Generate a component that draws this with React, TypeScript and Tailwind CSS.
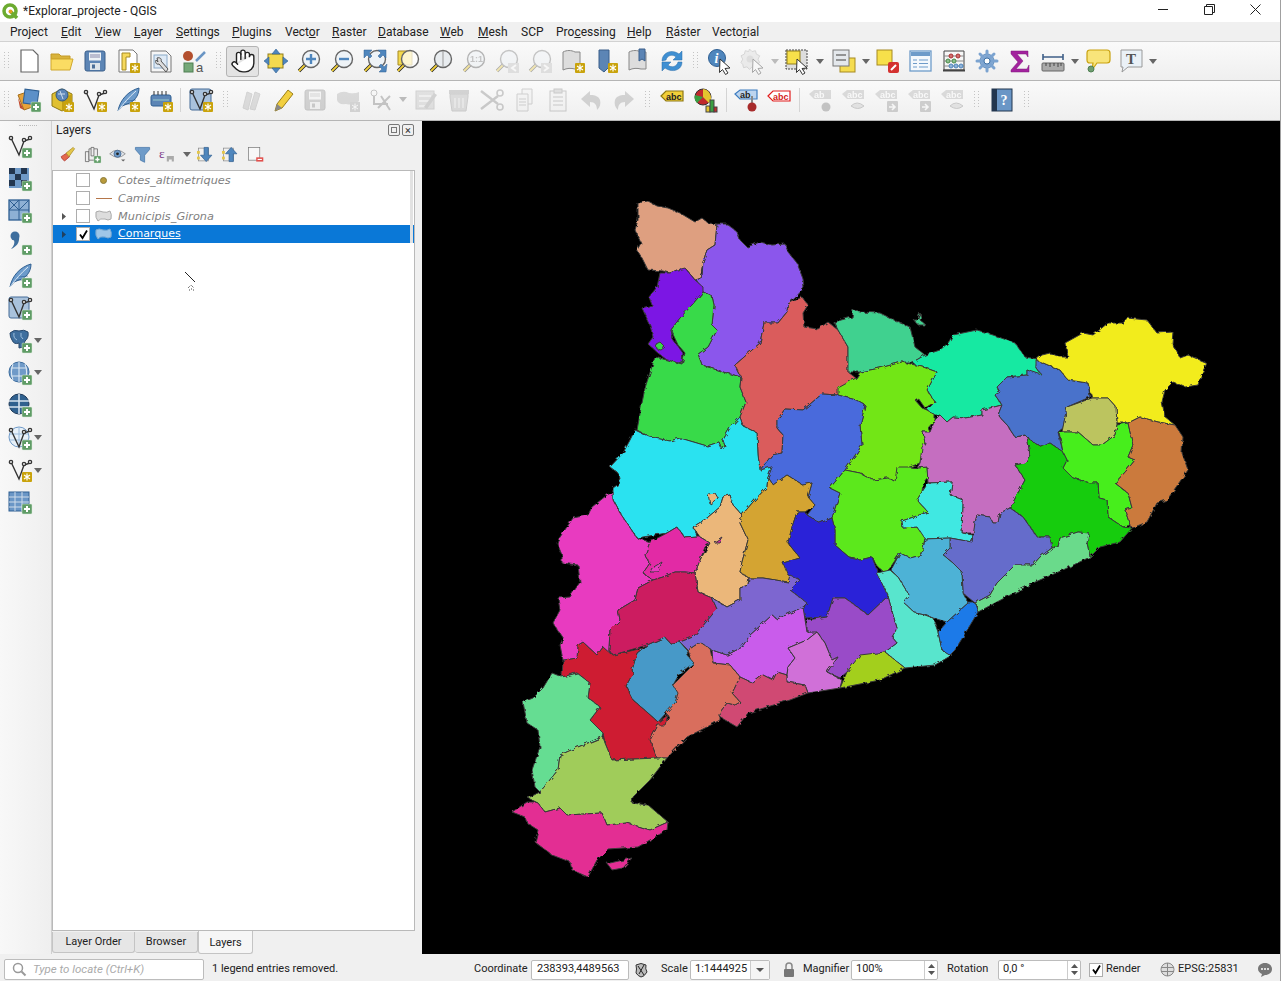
import type { ReactNode } from "react";
import { Hand } from "lucide-react";

const uiFont = "font-['Roboto','Liberation_Sans',sans-serif]";

function Svg({ children, size = 24, off }: { children: ReactNode; size?: number; off?: boolean }) {
  return (
    <svg
      width={size}
      height={size}
      viewBox="0 0 24 24"
      className={off ? "overflow-visible grayscale opacity-35" : "overflow-visible"}
    >
      {children}
    </svg>
  );
}

const Plus = () => (
  <g>
    <rect x="14" y="14" width="10" height="10" rx="1" fill="#5f9c66" stroke="#d8e8d8" strokeWidth="0.5" />
    <path d="M19 16v6M16 19h6" stroke="#fff" strokeWidth="2" />
  </g>
);

const Star = () => (
  <g>
    <rect x="14" y="14" width="10" height="10" rx="1" fill="#c9a30c" />
    <path d="M19 15.5v7M16 17l6 4M22 17l-6 4" stroke="#fff" strokeWidth="1.2" />
  </g>
);

const Vertices = ({ color = "#333" }: { color?: string }) => (
  <g fill="none" stroke={color} strokeWidth="1.4">
    <path d="M3 4l8 17 5-14 6-2" />
    <circle cx="3" cy="4" r="1.6" fill="#fff" />
    <circle cx="16" cy="6" r="1.6" fill="#fff" />
    <circle cx="22" cy="4" r="1.6" fill="#fff" />
  </g>
);

const Feather = () => (
  <g>
    <path d="M2 23C4 12 12 3 23 0c0 8-5 14-12 16l-5 2z" fill="#6c9bcb" stroke="#2f5f92" />
    <path d="M2 23C8 15 13 9 20 3" stroke="#dce9f5" fill="none" />
    <path d="M11 13l9-1M8 16l8 0" stroke="#2f5f92" strokeWidth="0.6" />
  </g>
);

const Mag = ({ children, lens = "#eef3f7" }: { children?: ReactNode; lens?: string }) => (
  <g>
    <path d="M9 15l-7 7" stroke="#222" strokeWidth="3.4" />
    <path d="M9 15l-7 7" stroke="#f1cf3a" strokeWidth="1.8" />
    <circle cx="14" cy="10" r="8.5" fill={lens} stroke="#666" strokeWidth="1.4" />
    {children}
  </g>
);

const Book = ({ x = 0 }: { x?: number }) => (
  <path d={`M${2 + x} 3c4-2 8-2 12 0l5 0v17h-5c-4-1-8-1-12 1z`} fill="#ddd" stroke="#888" />
);

const Floppy = () => (
  <g>
    <rect x="2" y="2" width="20" height="20" rx="2" fill="#5c85b5" stroke="#3a5f8a" />
    <rect x="6" y="3.5" width="12" height="8" fill="#eef2f6" />
    <path d="M7 6h10M7 8h10" stroke="#88a" />
    <rect x="7" y="14" width="10" height="7" fill="#dde4ea" />
    <rect x="9" y="15.5" width="3" height="4" fill="#4a6e98" />
  </g>
);

const Cursor = () => <path d="M12 10l10 9-5 .5 3 4.5-2.500 1.500-3-5-3 3z" fill="#fff" stroke="#333" strokeWidth="1" />;

const AbcTag = ({ bg, border, color = "#222" }: { bg: string; border: string; color?: string }) => (
  <g>
    <path d="M1 8l5-5h17v10H6z" fill={bg} stroke={border} strokeWidth="1.2" />
    <text x="6" y="12" fontSize="9" fontWeight="700" fontFamily="Liberation Sans" fill={color}>
      abc
    </text>
  </g>
);

const Globe = () => (
  <g>
    <circle cx="11" cy="11" r="10" fill="#6f9ac8" stroke="#3b6c9e" />
    <path d="M3 7h16M3 15h16M11 1v20M5 3c-2 5-2 11 0 16M17 3c2 5 2 11 0 16" stroke="#dbe7f2" strokeWidth="1.1" fill="none" />
  </g>
);

const icons: Record<string, ReactNode> = {
  newFile: <path d="M4 1h12l5 5v17H4z" fill="#fff" stroke="#666" strokeWidth="1.2" />,
  open: (
    <g>
      <path d="M1 5h8l2 2h9v3H1z" fill="#d9b33b" stroke="#c49a28" />
      <path d="M1 21V10h22l-3 11z" fill="#fadc63" stroke="#d0a82e" />
    </g>
  ),
  save: <Floppy />,
  saveAs: (
    <g>
      <path d="M3 1h14l4 4v18H3z" fill="#fff" stroke="#777" />
      <path d="M6 4h8v4H10v13H6z" fill="#f6d95c" stroke="#a68a22" />
      <Star />
    </g>
  ),
  props: (
    <g>
      <path d="M2 2h15l5 5v16H2z" fill="#f6f6f6" stroke="#777" />
      <rect x="5" y="6" width="13" height="13" fill="#dfeaf5" stroke="#8aa9c8" />
      <path d="M8 9c3-1 5 1 4 3l7 8-2 3-7-8c-3 1-4-2-3-4l2 2z" fill="#ddd" stroke="#555" />
    </g>
  ),
  style: (
    <g>
      <circle cx="6" cy="7" r="5" fill="#b34f2e" />
      <path d="M14 12L23 3" stroke="#6a95c4" strokeWidth="2.500" />
      <rect x="2" y="14" width="9" height="9" fill="#75a878" stroke="#4f7f52" />
      <text x="14" y="23" fontSize="13" fontFamily="Liberation Sans" fill="#555">a</text>
    </g>
  ),
  panTo: (
    <g>
      <rect x="4" y="5" width="15" height="14" fill="#f3d94f" stroke="#927e1a" />
      <path d="M12 0l4 5H8zM12 24l-4-5h8zM0 12l5-4v8zM24 12l-5 4V8z" fill="#4f86bd" stroke="#2f5f92" strokeWidth="0.6" />
    </g>
  ),
  zoomIn: (
    <Mag>
      <path d="M14 5v10M9 10h10" stroke="#4f86bd" strokeWidth="2.400" />
    </Mag>
  ),
  zoomOut: (
    <Mag>
      <path d="M9 10h10" stroke="#4f86bd" strokeWidth="2.400" />
    </Mag>
  ),
  zoomFull: (
    <g>
      <Mag />
      <path d="M1 1h8L6 4l3 3-2 2-3-3-3 3zM23 1v8l-3-3-3 3-2-2 3-3-3-3zM23 23h-7l3-3-3-3 2-2 3 3 3-3z" fill="#4f86bd" stroke="#2f5f92" strokeWidth="0.5" />
    </g>
  ),
  zoomLayer: (
    <g>
      <path d="M2 2h14v14H2z" fill="#f3d94f" stroke="#a68a22" />
      <Mag lens="#ffffffbb" />
    </g>
  ),
  zoomSel: (
    <Mag lens="#e8ecef">
      <path d="M14 2v16" stroke="#999" />
    </Mag>
  ),
  zoom11: (
    <g opacity="0.45">
      <Mag>
        <text x="8" y="13" fontSize="9" fontWeight="700" fontFamily="Liberation Sans" fill="#888">1:1</text>
      </Mag>
    </g>
  ),
  zoomLast: (
    <g opacity="0.35">
      <Mag />
      <path d="M24 14v10H13v-10z" fill="#bbb" />
      <path d="M21 16l-4 3 4 3" stroke="#fff" strokeWidth="2" fill="none" />
    </g>
  ),
  zoomNext: (
    <g opacity="0.35">
      <Mag />
      <path d="M24 14v10H13v-10z" fill="#bbb" />
      <path d="M16 16l4 3-4 3" stroke="#fff" strokeWidth="2" fill="none" />
    </g>
  ),
  bookNew: (
    <g>
      <Book />
      <Star />
    </g>
  ),
  bookBlue: (
    <g>
      <path d="M5 1h10v17l-5 5-5-4z" fill="#5c85b5" stroke="#3a5f8a" />
      <Star />
    </g>
  ),
  bookShow: (
    <g>
      <Book />
      <path d="M12 0h6v12l-3-2-3 2z" fill="#5c85b5" stroke="#3a5f8a" />
    </g>
  ),
  refresh: (
    <g fill="#3f8fd2" stroke="#2a6ca8" strokeWidth="0.5">
      <path d="M2 12C2 5 9 1 15 3c2 .7 3 1.400 4 2l3-3v9h-9l3-3c-3-3-9-2-10 3z" />
      <path d="M22 13c0 7-7 10-13 8-2-.7-3-1.400-4-2l-3 3v-9h9l-3 3c3 3 9 2 10-3z" />
    </g>
  ),
  identify: (
    <g>
      <circle cx="9" cy="9" r="8.500" fill="#4f86bd" stroke="#2f5f92" />
      <text x="6.500" y="14" fontSize="14" fontWeight="700" fontStyle="italic" fontFamily="Liberation Serif" fill="#fff">i</text>
      <Cursor />
    </g>
  ),
  action: (
    <g opacity="0.4">
      <path d="M10 0l3 3 4-1 1 4 4 2-2 4 2 4-4 2-1 4-4-1-3 3-3-3-4 1-1-4-2-2 2-4-2-4 4-2 1-4 4 1z" fill="#ddd" stroke="#999" transform="scale(.85)" />
      <circle cx="9" cy="10" r="3.500" fill="#bbb" />
      <Cursor />
    </g>
  ),
  select: (
    <g>
      <rect x="1" y="1" width="21" height="19" fill="#ddd" stroke="#444" strokeDasharray="2 1" />
      <rect x="2" y="2" width="13" height="13" fill="#f7e04a" stroke="#927e1a" />
      <Cursor />
    </g>
  ),
  attrForm: (
    <g>
      <rect x="8" y="9" width="15" height="14" fill="#f5dc4f" stroke="#a68a22" />
      <rect x="1" y="1" width="16" height="16" fill="#e4e8ec" stroke="#777" />
      <path d="M4 6h10M4 11h10" stroke="#777" strokeWidth="1.600" />
    </g>
  ),
  deselect: (
    <g>
      <rect x="1" y="1" width="15" height="15" fill="#f7e04a" stroke="#a68a22" />
      <rect x="12" y="13" width="11" height="11" rx="2" fill="#d4312f" />
      <path d="M15 21l5-5" stroke="#fff" strokeWidth="2" />
    </g>
  ),
  table: (
    <g>
      <rect x="1" y="2" width="21" height="20" fill="#f4f8fc" stroke="#6e9bc9" strokeWidth="1.300" />
      <rect x="2" y="3" width="19" height="4" fill="#6e9bc9" />
      <path d="M4 11h4M10 11h9M4 14.500h4M10 14.500h9M4 18h4M10 18h9" stroke="#6e9bc9" strokeWidth="1.200" />
    </g>
  ),
  stats: (
    <g fill="none">
      <path d="M2 2h20v19H2z" stroke="#444" />
      <path d="M1 21.500h22" stroke="#444" strokeWidth="2" />
      <path d="M2 7h20M2 12h20M2 17h20" stroke="#888" />
      <g fill="#d36c6c" stroke="#a33">
        <circle cx="9" cy="7" r="2" />
        <circle cx="16" cy="7" r="2" />
      </g>
      <g fill="#8cc08c" stroke="#4a8a4a">
        <circle cx="6" cy="12" r="2" />
        <circle cx="12" cy="12" r="2" />
      </g>
      <g fill="#8fb3d8" stroke="#4f86bd">
        <circle cx="9" cy="17" r="2" />
        <circle cx="14" cy="17" r="2" />
        <circle cx="19" cy="17" r="2" />
      </g>
    </g>
  ),
  gear: (
    <g>
      <circle cx="12" cy="12" r="7" fill="#86aad3" stroke="#5a89bb" />
      <path d="M12 2v20M2 12h20M5 5l14 14M19 5L5 19" stroke="#7ba3d0" strokeWidth="3" strokeLinecap="round" />
      <circle cx="12" cy="12" r="3" fill="#fff" stroke="#3f72a6" />
    </g>
  ),
  sum: <path d="M3 2h17v6l-2-3H9l6 7-7 8h11l2-4v7H3v-2l7-8-7-8z" fill="#a3239e" stroke="#7d1a7a" strokeWidth="0.5" />,
  measure: (
    <g>
      <path d="M2 5v6M22 5v6M2 8h20" stroke="#3f5f88" strokeWidth="1.600" />
      <rect x="1" y="14" width="22" height="8" rx="1" fill="#aaa" stroke="#666" />
      <path d="M5 14v3M9 14v4M13 14v3M17 14v4M20 14v3" stroke="#444" />
    </g>
  ),
  tip: (
    <g>
      <path d="M1 4q0-3 3-3h17q3 0 3 3v7q0 3-3 3H11l-5 7 1-7H4q-3 0-3-3z" fill="#f8e47a" stroke="#c9a20f" strokeWidth="1.200" />
      <circle cx="5" cy="20" r="3" fill="#6f9e70" stroke="#4f7f52" />
    </g>
  ),
  text: (
    <g>
      <path d="M2 1h21v17H9l-6 5 1-5H2z" fill="#eaf1f7" stroke="#999" />
      <text x="7" y="15" fontSize="15" fontWeight="700" fontFamily="Liberation Serif" fill="#555">T</text>
    </g>
  ),
  addLayer: (
    <g>
      <path d="M1 7l12-4 5 15-11 4z" fill="#e8a33a" stroke="#a56f1a" />
      <path d="M1 10l6 12-4-2z" fill="#c24b2f" />
      <rect x="7" y="2" width="14" height="14" fill="#5c90c8" stroke="#2f5f92" transform="rotate(8 14 9)" />
      <Plus />
    </g>
  ),
  addGpkg: (
    <g>
      <path d="M12 1l10 5v12l-10 5-10-5V6z" fill="#e0c030" stroke="#8d7814" />
      <path d="M12 11l10-5v12l-10 5z" fill="#c29f14" />
      <circle cx="12" cy="7" r="6" fill="#5c86b8" stroke="#33597f" />
      <path d="M8 6h7M10 3l3 8" stroke="#cde" />
      <Star />
    </g>
  ),
  newVertices: (
    <g>
      <Vertices />
      <Star />
    </g>
  ),
  newFeather: (
    <g>
      <Feather />
      <Star />
    </g>
  ),
  newChip: (
    <g>
      <rect x="2" y="7" width="20" height="11" rx="2" fill="#5c85b5" stroke="#2f5f92" />
      <path d="M5 3v4M9 3v4M13 3v4M17 3v4" stroke="#333" />
      <path d="M4 12h16" stroke="#9cc" />
      <Star />
    </g>
  ),
  vlayerNew: (
    <g>
      <rect x="1" y="1" width="21" height="21" rx="2" fill="#a9c2dc" stroke="#446b96" />
      <Vertices />
      <Star />
    </g>
  ),
  pencils: (
    <g opacity="0.28">
      <path d="M4 20L8 4l5 2-4 16zM11 21l5-17 5 2-5 16z" fill="#999" stroke="#777" />
    </g>
  ),
  pencil: (
    <g>
      <path d="M4 23l2-7L17 2l5 4-11 14z" fill="#f2cf3f" stroke="#9b7f18" />
      <path d="M4 23l2-7 5 4z" fill="#888" />
    </g>
  ),
  saveEdits: (
    <g className="grayscale" opacity="0.3">
      <Floppy />
    </g>
  ),
  addPoly: (
    <g opacity="0.3">
      <path d="M1 6q6-4 12-1 6 1 10-1v9q-5 5-13 3-8 1-9-4z" fill="#999" />
      <rect x="14" y="14" width="10" height="10" fill="#888" />
      <path d="M19 15.500v7M16 17l6 4M22 17l-6 4" stroke="#fff" />
    </g>
  ),
  vertexTool: (
    <g opacity="0.3" fill="none" stroke="#555">
      <circle cx="5" cy="5" r="3" />
      <path d="M5 8v8h14M9 20l12-12M12 8l9 14" strokeWidth="2" />
    </g>
  ),
  editForm: (
    <g opacity="0.28">
      <rect x="2" y="3" width="18" height="18" fill="#aaa" stroke="#777" />
      <path d="M5 8h12M5 13h12M5 18h8" stroke="#eee" strokeWidth="1.600" />
      <path d="M10 19L20 5l3 2-10 14z" fill="#777" />
    </g>
  ),
  trash: (
    <g opacity="0.28">
      <path d="M3 6h18v3l-2 14H5L3 9z" fill="#999" stroke="#666" />
      <rect x="2" y="2" width="20" height="4" fill="#777" />
      <path d="M8 10v10M12 10v10M16 10v10" stroke="#eee" />
    </g>
  ),
  scissors: (
    <g opacity="0.3" fill="none" stroke="#666" strokeWidth="1.600">
      <circle cx="20" cy="5" r="3" />
      <circle cx="20" cy="19" r="3" />
      <path d="M1 3l17 13M1 21L18 8" strokeWidth="2.400" />
    </g>
  ),
  copy: (
    <g opacity="0.3" fill="#eee" stroke="#777">
      <path d="M9 1h10v15H9z" />
      <path d="M4 6h11v17H4z" />
      <path d="M6 11h7M6 14h7M6 17h7" />
    </g>
  ),
  paste: (
    <g opacity="0.3" fill="#eee" stroke="#666">
      <rect x="4" y="3" width="16" height="20" />
      <rect x="8" y="1" width="8" height="4" fill="#aaa" />
      <path d="M7 9h10M7 13h10M7 17h10" />
    </g>
  ),
  undo: <path opacity="0.25" d="M11 3L2 11l9 8v-5c5 0 7 3 7 8 3-3 4-6 3-10-1-3-4-5-10-5z" fill="#666" />,
  redo: <path opacity="0.25" d="M13 3l9 8-9 8v-5c-5 0-7 3-7 8-3-3-4-6-3-10 1-3 4-5 10-5z" fill="#666" />,
  label: <AbcTag bg="#f2d03a" border="#8d7814" />,
  diagram: (
    <g>
      <circle cx="9" cy="9" r="8" fill="#c0292c" stroke="#333" />
      <path d="M9 9V1a8 8 0 0 1 7 5zM9 9l7-3a8 8 0 0 1-1 9z" fill="#e4c52f" />
      <path d="M9 9L3 15a8 8 0 0 1-2-8z" fill="#3a9e41" />
      <rect x="12" y="18" width="4" height="6" fill="#e4c52f" stroke="#444" />
      <rect x="16" y="12" width="4" height="12" fill="#3a9e41" stroke="#444" />
      <rect x="20" y="19" width="3" height="5" fill="#c0292c" stroke="#444" />
    </g>
  ),
  pinLabel: (
    <g>
      <path d="M1 6l5-4h17v9H6z" fill="#bcd4ee" stroke="#3d7cc0" strokeWidth="1.200" />
      <text x="6" y="10" fontSize="9" fontWeight="700" fontFamily="Liberation Sans" fill="#222">ab</text>
      <path d="M18 8v8" stroke="#888" strokeWidth="2" />
      <circle cx="18" cy="19" r="4.500" fill="#a82c2c" />
    </g>
  ),
  labelRed: <AbcTag bg="#fff" border="#e21d1d" color="#d41d1d" />,
  abPin: (
    <g opacity="0.3">
      <path d="M1 6l5-4h17v9H6z" fill="#999" />
      <text x="6" y="10" fontSize="9" fontWeight="700" fontFamily="Liberation Sans" fill="#fff">ab</text>
      <circle cx="18" cy="19" r="4.500" fill="#555" />
    </g>
  ),
  abcEye: (
    <g opacity="0.3">
      <path d="M1 6l5-4h17v9H6z" fill="#999" />
      <text x="6" y="10" fontSize="9" fontWeight="700" fontFamily="Liberation Sans" fill="#fff">abc</text>
      <path d="M10 18q6-6 13 0-6 5-13 0z" fill="#bbb" stroke="#666" />
    </g>
  ),
  abcBox: (
    <g opacity="0.3">
      <path d="M1 6l5-4h17v9H6z" fill="#999" />
      <text x="6" y="10" fontSize="9" fontWeight="700" fontFamily="Liberation Sans" fill="#fff">abc</text>
      <rect x="13" y="13" width="11" height="11" rx="1" fill="#777" />
      <path d="M15 19h6M18 16l3 3-3 3" stroke="#fff" strokeWidth="1.600" fill="none" />
    </g>
  ),
  help: (
    <g>
      <rect x="2" y="1" width="20" height="22" fill="#6a96c6" stroke="#22364f" />
      <rect x="2" y="1" width="5" height="22" fill="#22364f" />
      <text x="10.500" y="17" fontSize="14" fontWeight="700" fontFamily="Liberation Serif" fill="#fff">?</text>
    </g>
  ),
  // left toolbar
  ltVertices: (
    <g>
      <Vertices />
      <Plus />
    </g>
  ),
  ltRaster: (
    <g>
      <rect x="1" y="1" width="20" height="20" fill="#6f9ac8" />
      <path d="M1 1h6v6H1zM13 1h6v6h-6zM7 7h6v6H7zM1 13h6v6H1zM13 13h6v6h-6z" fill="#22364f" />
      <Plus />
    </g>
  ),
  ltMesh: (
    <g>
      <rect x="1" y="1" width="20" height="20" fill="#8eb0d4" stroke="#2f5f92" strokeWidth="1.300" />
      <path d="M1 1l10 10M1 11L11 1M11 11L21 1M1 11h20M11 1v20" stroke="#2f5f92" />
      <Plus />
    </g>
  ),
  ltComma: (
    <g>
      <circle cx="7" cy="5" r="4.500" fill="#3f6f9e" />
      <path d="M11 5c1 7-3 11-8 13 3-3 4-6 3-9z" fill="#3f6f9e" />
      <Plus />
    </g>
  ),
  ltFeather: (
    <g>
      <Feather />
      <Plus />
    </g>
  ),
  ltVLayer: (
    <g>
      <rect x="1" y="1" width="20" height="21" rx="2" fill="#a9c2dc" stroke="#446b96" />
      <Vertices />
      <Plus />
    </g>
  ),
  ltPostgis: (
    <g>
      <path d="M2 4q4-4 9-2 5-2 9 1 1 6-3 9l-2 6-4 1v-5q-5 2-7-3-2-3-2-7z" fill="#3f6f9e" stroke="#27486c" />
      <path d="M6 4q-1 5 3 7M13 4q-1 4 2 6" stroke="#9fbfdc" fill="none" />
      <Plus />
    </g>
  ),
  ltGlobeWms: (
    <g>
      <Globe />
      <Plus />
    </g>
  ),
  ltGlobeDark: (
    <g>
      <circle cx="11" cy="11" r="10" fill="#30618f" stroke="#1f3a59" />
      <path d="M1 8h20M1 14h20M11 1v20" stroke="#d6e3ef" strokeWidth="1.600" />
      <Plus />
    </g>
  ),
  ltGlobeV: (
    <g>
      <circle cx="11" cy="11" r="10" fill="#e7f0f8" stroke="#6f9ac8" />
      <path d="M2 8h18M2 14h18M11 1v20" stroke="#9cbcdc" />
      <Vertices />
      <Plus />
    </g>
  ),
  ltVStar: (
    <g>
      <Vertices />
      <Star />
    </g>
  ),
  ltTable: (
    <g>
      <rect x="1" y="2" width="20" height="19" fill="#6a96c6" stroke="#2f5f92" />
      <path d="M1 7h20M1 12h20M1 17h20M7 2v19M14 2v19" stroke="#cfdcea" />
      <Plus />
    </g>
  ),
  // layers panel toolbar
  lpStyle: (
    <g>
      <path d="M3 15l8-5 4 5-7 6c-2-1-4-3-5-6z" fill="#e36a4d" stroke="#a33" />
      <path d="M10 10l10-8 2 2-8 11z" fill="#e4c64a" stroke="#a68a22" />
    </g>
  ),
  lpGroup: (
    <g fill="#eee" stroke="#555">
      <path d="M2 8h5v14H2z" />
      <path d="M7 4h12v16H7z" />
      <path d="M10 2h4v12h-4z" />
      <Plus />
    </g>
  ),
  lpEye: (
    <g>
      <path d="M1 11q10-10 22 0-10 10-22 0z" fill="#dfe4ea" stroke="#777" />
      <circle cx="12" cy="11" r="5" fill="#6e9bc9" stroke="#3f5f88" />
      <circle cx="12" cy="11" r="2" fill="#222" />
      <path d="M17 19h6l-3 3z" fill="#666" />
    </g>
  ),
  lpFilter: <path d="M2 2h20v3l-7 8v10l-6-3v-7L2 5z" fill="#6e9bc9" stroke="#3f72a6" />,
  lpExpr: (
    <g>
      <text x="0" y="17" fontSize="19" fontFamily="Liberation Serif" fill="#7e3a8c">ε</text>
      <path d="M11 14h10v8h-3v-3h-4v3h-3z" fill="#aaa" />
    </g>
  ),
  lpExpand: (
    <g>
      <rect x="2" y="3" width="14" height="18" fill="#f1f1f1" stroke="#888" />
      <rect x="0" y="7" width="4" height="4" fill="#e4c64a" />
      <rect x="0" y="15" width="4" height="4" fill="#e4c64a" />
      <path d="M10 2h6v11h5l-8 9-8-9h5z" fill="#4f86bd" stroke="#2f5f92" />
    </g>
  ),
  lpCollapse: (
    <g>
      <rect x="2" y="3" width="14" height="18" fill="#f1f1f1" stroke="#888" />
      <rect x="0" y="7" width="4" height="4" fill="#e4c64a" />
      <rect x="0" y="15" width="4" height="4" fill="#e4c64a" />
      <path d="M10 22h6V11h5l-8-9-8 9h5z" fill="#4f86bd" stroke="#2f5f92" />
    </g>
  ),
  lpRemove: (
    <g>
      <rect x="2" y="2" width="16" height="18" fill="#f7f7f7" stroke="#777" />
      <rect x="13" y="16" width="10" height="6" fill="#e2504d" />
      <path d="M15 19h6" stroke="#fff" strokeWidth="1.600" />
    </g>
  ),
};

function Grip({ w = 15 }: { w?: number }) {
  return (
    <div className="flex h-full shrink-0 items-center justify-center" style={{ width: w }}>
      <svg width="5" height="18" viewBox="0 0 5 18">
        {[0, 3, 6, 9, 12, 15].map((y) => (
          <g key={y} fill="#c4c4c4">
            <rect x="0" y={y} width="1" height="1" />
            <rect x="4" y={y} width="1" height="1" />
          </g>
        ))}
      </svg>
    </div>
  );
}

const Arrow = ({ w = 11, color = "#666" }: { w?: number; color?: string }) => (
  <div className="flex h-full shrink-0 items-center justify-center" style={{ width: w }}>
    <svg width="8" height="5" viewBox="0 0 8 5">
      <path d="M0 0h8L4 5z" fill={color} />
    </svg>
  </div>
);

const Btn = ({ name, w = 33 }: { name: string; w?: number }) => (
  <div className="flex h-full shrink-0 items-center justify-center" style={{ width: w }}>
    <Svg>{icons[name]}</Svg>
  </div>
);

const Sep = ({ w = 7 }: { w?: number }) => (
  <div className="flex h-full shrink-0 items-center justify-center" style={{ width: w }}>
    <div className="h-[24px] w-px bg-[#d4d4d4]" />
  </div>
);

type Region = { fill: string; pts: string };

const regions: Region[] = [
  { fill: "#de9f80", pts: "638,203 648,201 657,206 668,208 680,213 695,222 702,218 708,223 717,224 715,245 707,250 703,262 701,273 702,278 695,280 687,270 677,270 670,273 663,271 648,270 642,258 637,250 641,243 635,230 638,220" },
  { fill: "#8b57ec", pts: "717,224 727,224 737,232 740,240 747,247 760,242 772,245 785,244 788,252 797,263 803,279 804,288 795,298 788,304 787,312 778,323 764,323 760,343 743,358 735,365 741,377 723,372 702,365 698,354 708,347 717,330 712,325 714,305 712,296 703,292 697,280 702,277 703,262 707,250 715,245" },
  { fill: "#7b12e4", pts: "660,273 670,273 677,270 685,268 695,280 703,287 703,292 692,305 692,310 680,318 671,330 673,340 683,353 682,364 667,360 658,353 648,344 653,337 650,325 642,308 652,305 649,297 657,287" },
  { fill: "#38da49", pts: "703,292 712,296 714,305 712,325 717,330 708,347 698,354 702,365 723,372 741,377 740,387 746,402 740,417 730,428 723,440 725,446 722,450 719,442 707,446 680,438 670,441 650,437 637,430 642,403 645,388 655,357 667,360 682,364 685,353 678,345 671,330 680,318 692,305" },
  { fill: "#38da49", pts: "656,344 660,342 665,347 661,350 657,349" },
  { fill: "#da5c5c", pts: "802,297 808,305 803,313 804,327 818,329 828,322 838,330 848,347 848,372 856,378 840,388 838,395 822,394 803,410 785,409 777,420 777,428 783,435 782,453 772,455 760,470 758,455 757,433 743,426 740,417 746,402 740,387 741,377 735,365 743,358 760,343 764,323 778,323 787,312 788,304" },
  { fill: "#3fd18f", pts: "834,322 852,317 853,310 860,312 880,313 898,322 910,327 915,347 925,355 913,362 902,362 880,368 860,372 848,372 848,347 838,330" },
  { fill: "#3fd18f", pts: "917,320 920,313 921,317 920,320 926,325 918,325 914,320" },
  { fill: "#18e9a2", pts: "913,362 925,355 940,350 948,343 953,335 977,330 993,335 1015,343 1025,357 1037,359 1036,368 1042,375 1030,372 1027,370 1027,375 1007,377 997,387 1000,392 995,395 1002,405 982,410 982,415 965,418 953,417 947,422 940,415 935,415 927,410 935,402 927,390 937,372 923,367 915,365" },
  { fill: "#72e616", pts: "838,388 856,378 860,372 880,368 902,362 915,365 923,367 937,372 927,390 935,402 925,408 918,398 915,400 922,408 927,410 935,415 935,420 928,428 930,432 923,432 925,443 920,463 910,467 897,473 895,482 888,478 873,480 860,473 845,470 862,445 860,425 865,405 856,400 838,395" },
  { fill: "#4a6bdc", pts: "822,394 838,395 856,400 865,405 860,425 862,445 845,470 830,488 840,493 833,515 832,518 820,523 807,515 815,505 808,497 812,483 803,485 787,475 773,485 768,477 772,467 760,470 772,455 782,453 783,435 777,428 777,420 785,409 803,410" },
  { fill: "#2ce2f0", pts: "635,430 650,437 670,441 680,438 707,446 719,442 722,450 725,446 723,440 730,428 740,417 743,426 757,433 758,455 760,470 772,467 768,477 767,487 753,502 742,515 733,505 730,495 723,497 720,507 707,518 693,527 698,537 685,538 677,527 667,533 637,538 620,513 613,500 613,488 620,483 618,473 610,467 623,453 630,440" },
  { fill: "#ebb77a", pts: "708,494 715,493 718,498 710,504" },
  { fill: "#ebb77a", pts: "693,527 707,518 720,507 723,497 730,495 733,505 742,515 740,523 748,540 742,562 740,572 749,578 748,585 740,588 740,600 727,607 712,598 698,592 695,573 700,560 710,543 700,537" },
  { fill: "#e22ba5", pts: "715,543 723,538 720,543" },
  { fill: "#d4a433", pts: "768,477 773,485 787,475 803,485 812,483 808,497 815,505 805,512 797,512 792,527 788,543 800,558 783,563 792,573 788,582 763,578 749,578 740,572 742,562 748,540 740,523 742,515 753,502 767,487" },
  { fill: "#5ce81e", pts: "860,473 873,480 888,478 895,482 897,467 910,467 917,468 927,467 928,477 923,483 922,492 917,500 928,512 902,521 903,528 917,527 925,537 922,555 910,558 900,553 892,565 890,568 885,573 878,567 872,557 860,560 850,558 835,545 835,530 832,518 840,493 830,488 845,470" },
  { fill: "#2c24d8", pts: "792,527 797,512 805,512 807,515 820,523 832,518 835,530 835,545 850,558 860,560 872,557 878,573 888,596 868,615 845,598 833,598 827,617 805,618 803,610 806,603 790,590 800,580 788,575 783,563 800,558 788,543" },
  { fill: "#c56ec0", pts: "922,447 925,443 923,432 930,432 935,420 940,415 947,422 953,417 965,418 982,415 982,410 1002,405 998,415 1007,425 1015,437 1027,435 1030,455 1025,463 1015,465 1025,480 1010,508 1000,513 998,523 993,523 990,517 977,515 975,523 975,533 962,533 963,500 950,495 952,482 928,483 927,467 917,468 920,463" },
  { fill: "#41e8e2", pts: "928,483 952,482 950,495 963,500 962,533 973,535 972,542 950,538 925,539 917,527 903,528 902,521 928,512 917,500 922,492" },
  { fill: "#4872cb", pts: "1036,360 1060,370 1068,380 1088,383 1090,397 1067,407 1063,428 1058,432 1063,452 1050,443 1042,447 1030,440 1025,435 1015,437 1007,425 998,415 1002,405 995,395 1000,392 997,387 1007,377 1027,375 1027,370 1042,375 1036,368" },
  { fill: "#f2ec1b", pts: "1042,355 1050,353 1060,357 1068,357 1065,343 1083,333 1093,335 1108,323 1123,323 1127,318 1147,320 1157,333 1173,332 1172,343 1180,358 1188,355 1207,363 1202,373 1198,385 1185,387 1173,382 1165,390 1162,402 1165,417 1175,425 1158,422 1140,417 1128,423 1117,423 1116,407 1108,398 1092,398 1088,383 1068,380 1060,370 1036,360" },
  { fill: "#bcc45f", pts: "1067,407 1092,398 1108,398 1116,407 1117,425 1115,435 1102,445 1093,445 1078,432 1062,432" },
  { fill: "#46ee1d", pts: "1059,432 1078,432 1093,445 1102,445 1115,435 1117,425 1128,423 1133,445 1128,457 1135,460 1127,470 1115,483 1128,493 1132,508 1125,510 1130,525 1123,527 1108,517 1107,500 1099,498 1098,483 1090,483 1073,478 1063,468 1067,460 1063,452" },
  { fill: "#cb7a3e", pts: "1128,423 1140,417 1158,422 1175,425 1183,437 1182,453 1188,470 1167,500 1157,503 1147,522 1132,528 1130,525 1125,510 1132,508 1128,493 1115,483 1127,470 1135,460 1128,457 1133,445" },
  { fill: "#14cc0e", pts: "1027,436 1030,440 1042,447 1050,443 1063,452 1067,460 1063,468 1073,478 1090,483 1098,483 1099,498 1107,500 1108,517 1123,527 1132,528 1120,542 1100,547 1090,557 1087,543 1089,533 1078,532 1060,538 1058,547 1052,548 1050,537 1037,537 1023,517 1010,508 1025,480 1015,465 1025,463 1030,455" },
  { fill: "#656ccb", pts: "975,523 977,515 990,517 993,523 998,523 1000,513 1010,508 1023,517 1037,537 1050,537 1052,548 1040,557 1033,565 1015,565 997,583 990,595 975,603 963,593 962,572 953,563 943,555 950,548 950,538 972,542" },
  { fill: "#4db2d6", pts: "925,539 950,538 950,548 943,555 953,563 962,572 963,593 968,603 947,622 933,618 925,615 915,613 903,602 909,595 898,577 891,570 900,553 910,558 922,555" },
  { fill: "#6ada8b", pts: "975,603 990,595 997,583 1015,565 1033,565 1040,557 1052,548 1058,547 1060,538 1078,532 1089,533 1087,543 1090,557 1063,570 1033,583 978,612" },
  { fill: "#58e5cd", pts: "877,573 890,570 898,577 909,595 903,602 915,613 925,615 933,618 938,632 942,650 952,655 935,665 905,668 895,660 885,652 897,643 892,637 897,628 893,615 888,596" },
  { fill: "#1a7ae8", pts: "968,603 975,603 978,612 963,637 955,650 950,655 942,650 938,632 947,622" },
  { fill: "#994bc8", pts: "807,620 827,617 833,598 845,598 868,615 888,596 893,615 897,628 892,637 897,643 885,652 860,657 847,672 840,678 827,672 838,657 832,660 825,643 818,633 807,632" },
  { fill: "#a3cf1a", pts: "840,688 847,672 860,655 885,652 895,660 905,668 880,680" },
  { fill: "#c95ceb", pts: "712,650 727,655 742,647 750,635 772,615 777,619 803,607 807,632 817,632 807,640 788,648 795,658 788,667 787,675 777,672 773,680 763,675 753,683 740,677 730,665 713,663" },
  { fill: "#d06fd8", pts: "788,648 807,640 817,632 825,643 832,660 838,657 827,672 842,680 840,688 808,693 805,685 787,682 787,675 788,667 795,658" },
  { fill: "#d04a73", pts: "740,677 753,683 763,675 773,680 777,672 787,675 787,682 805,685 808,693 790,700 767,707 748,713 737,727 720,717 720,712 727,703 735,705 740,702 732,693" },
  { fill: "#d96e5d", pts: "688,650 700,642 710,648 713,663 730,665 740,677 732,693 740,702 735,705 727,703 720,712 720,720 707,727 687,737 667,758 657,758 650,740 658,725 670,718 662,707 675,697 673,685 680,678 693,665" },
  { fill: "#4799c8", pts: "665,637 670,643 680,642 687,650 688,656 694,663 680,673 673,685 678,693 675,703 658,722 648,713 633,700 626,686 633,673 632,670 637,653 647,645" },
  { fill: "#ce1c31", pts: "563,660 577,658 578,645 583,642 597,655 603,647 613,655 643,648 637,653 632,670 633,673 626,686 633,700 648,713 658,722 668,715 665,725 658,725 650,740 657,758 612,760 605,743 603,733 590,720 600,707 588,698 590,683 577,673 562,677" },
  { fill: "#65dd92", pts: "552,673 562,677 577,673 590,683 588,698 600,707 590,720 603,733 602,737 578,747 560,755 558,770 540,792 535,787 532,770 540,747 538,730 527,723 523,702 533,698 543,688" },
  { fill: "#a0cc5a", pts: "603,737 605,743 612,760 657,758 667,758 650,780 633,797 632,803 648,805 668,822 650,830 627,823 607,825 602,813 567,815 560,808 545,812 538,803 528,798 540,792 558,770 560,755 578,747" },
  { fill: "#e32e93", pts: "512,812 527,802 535,802 538,803 545,812 560,808 567,815 602,813 607,825 627,823 650,830 668,822 667,830 638,847 608,849 597,860 588,877 572,870 570,862 552,855 535,842 538,830 527,823 525,817" },
  { fill: "#e32e93", pts: "606,862 610,863 632,858 623,868 612,870" },
  { fill: "#e83ac0", pts: "558,540 573,518 588,515 592,507 607,495 613,492 613,500 620,513 637,538 650,542 645,555 650,563 643,573 653,580 638,588 635,600 618,610 620,620 610,630 609,650 612,655 603,647 597,655 583,642 578,645 577,658 563,660 560,645 563,638 553,623 560,610 558,598 570,597 580,582 578,565 562,563 562,555 557,543" },
  { fill: "#e22ba5", pts: "650,542 667,533 677,527 685,538 698,537 700,537 710,543 705,547 700,560 695,573 685,572 675,572 663,577 653,580 643,573 650,563 645,555" },
  { fill: "#e83ac0", pts: "652,568 662,562 658,572 650,572" },
  { fill: "#cc1a60", pts: "653,580 663,577 675,572 685,572 695,573 698,592 712,598 717,609 702,627 693,637 680,642 670,643 665,637 647,645 613,655 609,650 610,630 620,620 618,610 635,600 638,588" },
  { fill: "#7d66d0", pts: "740,588 748,585 749,578 763,578 788,582 790,575 800,580 790,590 807,603 803,607 777,619 772,615 750,635 742,647 727,655 712,650 700,642 688,650 680,642 693,637 702,627 717,609 712,598 727,607 740,600" },
];

function MapCanvas() {
  return (
    <div className="min-w-0 flex-1 bg-black">
      <svg viewBox="422 121 858 833" className="block h-full w-full" preserveAspectRatio="xMinYMin slice">
        <defs>
          <filter id="rough" x="0" y="0" width="100%" height="100%" filterUnits="objectBoundingBox">
            <feTurbulence type="fractalNoise" baseFrequency="0.2" numOctaves="2" seed="4" />
            <feDisplacementMap in="SourceGraphic" scale="4" />
          </filter>
        </defs>
        <g filter="url(#rough)">
          {regions.map((r, i) => (
            <polygon key={i} points={r.pts} fill={r.fill} stroke="#3a3a3a" strokeWidth="1" strokeLinejoin="round" />
          ))}
        </g>
      </svg>
    </div>
  );
}

const layerRows = [
  { name: "Cotes_altimetriques", kind: "point" },
  { name: "Camins", kind: "line" },
  { name: "Municipis_Girona", kind: "poly", expand: true },
];

const PolySymbol = ({ fill, stroke }: { fill: string; stroke: string }) => (
  <svg width="17" height="12" viewBox="0 0 17 12">
    <path d="M1 2q3-2 7 0 4 1 7-1 2 3 1 8-3 2-6 0-5-1-7 2-3-3-2-9z" fill={fill} stroke={stroke} />
  </svg>
);

const Check = ({ checked, bg = "bg-white" }: { checked?: boolean; bg?: string }) => (
  <div className={`flex h-[14px] w-[14px] items-center justify-center border border-[#adadad] ${bg}`}>
    {checked && (
      <svg width="11" height="11" viewBox="0 0 11 11">
        <path d="M2 5.500l2.500 3.500L9 1.500" fill="none" stroke="#000" strokeWidth="1.800" />
      </svg>
    )}
  </div>
);

function LayersPanel() {
  return (
    <div className="flex h-full w-[363px] shrink-0 flex-col">
      <div className="flex h-[18px] items-center justify-between pl-[4px] pr-[1px] text-[12px] text-[#222]">
        <span>Layers</span>
        <div className="flex gap-[2px]">
          <div className="flex h-[12px] w-[12px] items-center justify-center rounded-[2px] border border-[#777]">
            <div className="h-[6px] w-[6px] border border-[#777]" />
          </div>
          <div className="flex h-[12px] w-[12px] items-center justify-center rounded-[2px] border border-[#777] text-[11px] leading-none text-[#333]">
            ×
          </div>
        </div>
      </div>
      <div className="flex h-[31px] items-center pl-[3px]">
        {["lpStyle", "lpGroup", "lpEye", "lpFilter", "lpExpr"].map((n) => (
          <div key={n} className="flex w-[25px] justify-center">
            <Svg size={17}>{icons[n]}</Svg>
          </div>
        ))}
        <Arrow w={13} />
        {["lpExpand", "lpCollapse", "lpRemove"].map((n) => (
          <div key={n} className="flex w-[25px] justify-center">
            <Svg size={17}>{icons[n]}</Svg>
          </div>
        ))}
      </div>
      <div className="relative min-h-0 flex-1 border border-[#b9b9b9] bg-white">
        {layerRows.map((r) => (
          <div key={r.name} className="flex h-[18px] items-center pr-[1px] font-['DejaVu_Sans',sans-serif] text-[11.3px] italic text-[#7f7f7f]">
            <div className="flex w-[23px] justify-end pr-[10px]">
              {r.expand && (
                <svg width="4" height="7" viewBox="0 0 4 7">
                  <path d="M0 0l4 3.500L0 7z" fill="#555" />
                </svg>
              )}
            </div>
            <Check />
            <div className="mr-[1px] flex w-[27px] justify-center">
              {r.kind === "point" && <div className="h-[7px] w-[7px] rounded-full border border-[#8b7b3a] bg-[#b99a3b]" />}
              {r.kind === "line" && <div className="h-px w-[16px] bg-[#b5764a]" />}
              {r.kind === "poly" && <PolySymbol fill="#ddd" stroke="#aaa" />}
            </div>
            <span className="flex-1 pt-[2px]">{r.name}</span>
            <div className="h-full w-[3px] bg-[#e2e2e2]" />
          </div>
        ))}
        <div className="flex h-[18px] items-center bg-[#0a78d7] pr-[1px] font-['DejaVu_Sans',sans-serif] text-[11px] text-white">
          <div className="flex w-[23px] justify-end pr-[10px]">
            <svg width="4" height="7" viewBox="0 0 4 7">
              <path d="M0 0l4 3.500L0 7z" fill="#20405f" />
            </svg>
          </div>
          <Check checked />
          <div className="mr-[1px] flex w-[27px] justify-center">
            <PolySymbol fill="#9fc6e8" stroke="#7aa8d0" />
          </div>
          <span className="flex-1 pt-[1px] underline">Comarques</span>
          <div className="h-full w-[3px] bg-[#e2e2e2]" />
        </div>
        <svg width="12" height="20" viewBox="0 0 12 20" className="absolute left-[131px] top-[100px]">
          <path d="M1 1l10 10" stroke="#222" />
          <path d="M4 17l3-3 3 3M7 18h1M5 19h1M9 19h1" stroke="#444" strokeDasharray="1 1" fill="none" />
        </svg>
      </div>
      <div className="flex h-[23px] items-start bg-[#f0f0f0] pt-[1px] text-[11px] text-[#222]">
        <div className="flex h-[21px] w-[83px] items-center justify-center rounded-b-[3px] border border-t-0 border-[#c4c4c4] bg-[#e6e6e6] pt-[1px]">
          Layer Order
        </div>
        <div className="flex h-[21px] w-[63px] items-center justify-center rounded-b-[3px] border border-l-0 border-t-0 border-[#c4c4c4] bg-[#e6e6e6] pt-[1px]">
          Browser
        </div>
        <div className="mt-[-2px] flex h-[24px] w-[55px] items-center justify-center rounded-b-[3px] border border-t-0 border-[#c4c4c4] bg-[#f6f6f6] pt-[4px]">
          Layers
        </div>
      </div>
    </div>
  );
}

const leftTools: { n: string; dd?: boolean }[] = [
  { n: "ltVertices" },
  { n: "ltRaster" },
  { n: "ltMesh" },
  { n: "ltComma" },
  { n: "ltFeather" },
  { n: "ltVLayer" },
  { n: "ltPostgis", dd: true },
  { n: "ltGlobeWms", dd: true },
  { n: "ltGlobeDark" },
  { n: "ltGlobeV", dd: true },
  { n: "ltVStar", dd: true },
  { n: "ltTable" },
];

function SpinArrows() {
  return (
    <div className="flex h-full w-[13px] flex-col items-center justify-center gap-[3px] border-l border-[#ccc]">
      <svg width="7" height="4" viewBox="0 0 7 4"><path d="M0 4h7L3.500 0z" fill="#555" /></svg>
      <svg width="7" height="4" viewBox="0 0 7 4"><path d="M0 0h7L3.500 4z" fill="#555" /></svg>
    </div>
  );
}

function StatusBar() {
  const box = "flex h-[20px] items-center rounded-[2px] border border-[#bcbcbc] bg-white";
  return (
    <div className="flex h-[27px] shrink-0 items-center bg-[#f0f0f0] pl-[4px] pt-[4px] text-[11px] text-[#222]">
      <div className={`${box} h-[21px] w-[200px] pl-[7px]`}>
        <svg width="15" height="15" viewBox="0 0 15 15">
          <circle cx="6" cy="6" r="4.500" fill="none" stroke="#999" strokeWidth="1.500" />
          <path d="M9.500 9.500l4 4" stroke="#999" strokeWidth="2" />
        </svg>
        <span className="ml-[6px] text-[11.5px] italic text-[#aaa]">Type to locate (Ctrl+K)</span>
      </div>
      <span className="ml-[8px] w-[262px]">1 legend entries removed.</span>
      <span className="w-[53px]">Coordinate</span>
      <div className={`${box} ml-[4px] w-[98px] pl-[5px]`}>238393,4489563</div>
      <svg width="16" height="16" viewBox="0 0 16 16" className="ml-[4px]">
        <path d="M3 3q5-3 10 0-1 4 1 7-3 5-6 5-3-1-5-4 1-4 0-8z" fill="#bbb" stroke="#333" />
        <path d="M5 4l6 9M11 3l-5 9" stroke="#222" />
      </svg>
      <span className="ml-[12px] w-[26px]">Scale</span>
      <div className={`${box} ml-[3px] w-[80px] justify-between pl-[4px]`}>
        1:1444925
        <div className="flex h-full w-[19px] items-center justify-center border-l border-[#ccc] bg-[#f5f5f5]">
          <svg width="8" height="4" viewBox="0 0 8 4"><path d="M0 0h8L4 4z" fill="#555" /></svg>
        </div>
      </div>
      <svg width="12" height="15" viewBox="0 0 12 15" className="ml-[13px]">
        <path d="M3 7V4a3 3 0 0 1 6 0v3" fill="none" stroke="#888" strokeWidth="1.500" />
        <rect x="1" y="7" width="10" height="8" rx="1" fill="#777" />
      </svg>
      <span className="ml-[8px] w-[44px]">Magnifier</span>
      <div className={`${box} ml-[4px] w-[87px] justify-between pl-[4px]`}>
        100%
        <SpinArrows />
      </div>
      <span className="ml-[9px] w-[42px]">Rotation</span>
      <div className={`${box} ml-[9px] w-[83px] justify-between pl-[4px]`}>
        0,0 °
        <SpinArrows />
      </div>
      <div className="ml-[8px]">
        <Check checked />
      </div>
      <span className="ml-[3px] w-[35px]">Render</span>
      <svg width="15" height="15" viewBox="0 0 15 15" className="ml-[19px]">
        <circle cx="7.500" cy="7.500" r="6.500" fill="#ddd" stroke="#888" />
        <path d="M1 5.500h13M1 9.500h13M7.500 1v13" stroke="#888" />
      </svg>
      <span className="ml-[3px] w-[59px]">EPSG:25831</span>
      <svg width="16" height="15" viewBox="0 0 16 15" className="ml-[20px]">
        <path d="M8 1c4 0 7 2.500 7 6s-3 6-7 6l-4 2 1-3C3 11 1 9.500 1 7c0-3.500 3-6 7-6z" fill="#777" />
        <circle cx="5" cy="7" r="1" fill="#fff" />
        <circle cx="8" cy="7" r="1" fill="#fff" />
        <circle cx="11" cy="7" r="1" fill="#fff" />
      </svg>
    </div>
  );
}

const menus: [string, number, number][] = [
  ["Project", -1, 51],
  ["Edit", 0, 34],
  ["View", 0, 39],
  ["Layer", 0, 42],
  ["Settings", 0, 56],
  ["Plugins", 0, 53],
  ["Vector", 4, 47],
  ["Raster", 0, 46],
  ["Database", 0, 62],
  ["Web", 0, 38],
  ["Mesh", 0, 43],
  ["SCP", -1, 35],
  ["Processing", 3, 71],
  ["Help", 0, 39],
  ["Ráster", 0, 46],
  ["Vectorial", 5, 50],
];

export default function App() {
  return (
    <div className={`flex h-[981px] w-[1281px] flex-col overflow-hidden border-r border-[#a0a0a0] bg-[#f0f0f0] ${uiFont}`}>
      <div className="flex h-[22px] shrink-0 items-center bg-white pl-[2px] text-[12px] text-[#222]">
        <svg width="17" height="17" viewBox="0 0 17 17">
          <circle cx="8" cy="8" r="6" fill="#fff" stroke="#6cab30" strokeWidth="3.500" />
          <path d="M9 9l6 6" stroke="#6cab30" strokeWidth="3.500" />
          <circle cx="8.500" cy="8.500" r="2" fill="#e0a020" />
        </svg>
        <span className="ml-[4px]">*Explorar_projecte - QGIS</span>
        <div className="ml-auto flex h-full items-center pb-[4px] pr-[2px]">
          <div className="flex w-[46px] justify-center">
            <div className="h-px w-[10px] bg-[#222]" />
          </div>
          <div className="flex w-[46px] justify-center">
            <svg width="11" height="11" viewBox="0 0 11 11">
              <path d="M.5 2.500h8v8h-8zM2.500 2.500v-2h8v8h-2" fill="none" stroke="#222" />
            </svg>
          </div>
          <div className="flex w-[46px] justify-center">
            <svg width="11" height="11" viewBox="0 0 11 11">
              <path d="M.5.5l10 10M10.500.5l-10 10" stroke="#222" />
            </svg>
          </div>
        </div>
      </div>

      <div className="flex h-[20px] shrink-0 items-center border-b border-[#d2d2d2] pl-[10px] text-[12px] text-[#222]">
        {menus.map(([m, u, w]) => (
          <span key={m} className="shrink-0" style={{ width: w }}>
            {u < 0 ? (
              m
            ) : (
              <>
                {m.slice(0, u)}
                <span className="underline">{m[u]}</span>
                {m.slice(u + 1)}
              </>
            )}
          </span>
        ))}
      </div>

      <div className="flex h-[39px] shrink-0 items-center border-b border-[#b5b5b5] bg-gradient-to-b from-[#fafafa] to-[#efefef]">
        <Grip w={12} />
        {["newFile", "open", "save", "saveAs", "props", "style"].map((n) => (
          <Btn key={n} name={n} />
        ))}
        <Grip w={16} />
        <div className="flex h-[31px] w-[33px] shrink-0 items-center justify-center rounded-[3px] border border-[#b4b4b4] bg-[#e3e3e3]">
          <Hand size={26} fill="#fff" color="#222" strokeWidth={1.3} />
        </div>
        {["panTo", "zoomIn", "zoomOut", "zoomFull", "zoomLayer", "zoomSel", "zoom11", "zoomLast", "zoomNext", "bookNew", "bookBlue", "bookShow", "refresh"].map((n) => (
          <Btn key={n} name={n} />
        ))}
        <Grip w={15} />
        <Btn name="identify" />
        <Btn name="action" />
        <Arrow color="#bbb" />
        <Btn name="select" />
        <Arrow w={14} />
        <Btn name="attrForm" />
        <Arrow />
        {["deselect", "table", "stats", "gear", "sum", "measure"].map((n) => (
          <Btn key={n} name={n} />
        ))}
        <Arrow w={12} />
        <Btn name="tip" />
        <Btn name="text" />
        <Arrow />
      </div>

      <div className="flex h-[40px] shrink-0 items-center border-b border-[#b5b5b5] bg-gradient-to-b from-[#fafafa] to-[#efefef] pb-[2px]">
        <Grip w={12} />
        {["addLayer", "addGpkg", "newVertices", "newFeather", "newChip"].map((n) => (
          <Btn key={n} name={n} />
        ))}
        <Sep />
        <Btn name="vlayerNew" />
        <Grip w={17} />
        <Btn name="pencils" />
        <Btn name="pencil" w={31} />
        {["saveEdits", "addPoly", "vertexTool"].map((n) => (
          <Btn key={n} name={n} />
        ))}
        <Arrow w={12} color="#bbb" />
        {["editForm", "trash", "scissors", "copy", "paste", "undo", "redo"].map((n) => (
          <Btn key={n} name={n} />
        ))}
        <Grip w={15} />
        <Btn name="label" />
        <Btn name="diagram" w={35} />
        <Sep w={6} />
        <Btn name="pinLabel" />
        <Btn name="labelRed" />
        <Sep w={8} />
        {["abPin", "abcEye", "abcBox", "abcBox", "abcEye"].map((n, i) => (
          <Btn key={i} name={n} />
        ))}
        <Grip w={17} />
        <Btn name="help" />
        <Grip w={17} />
      </div>

      <div className="flex min-h-0 flex-1">
        <div className="flex h-full w-[52px] shrink-0 flex-col items-start border-r border-[#d0d0d0] bg-gradient-to-r from-[#f8f8f8] to-[#efefef] pl-[8px] pt-[4px]">
          <div className="mb-[2px] ml-[11px] h-[3px] w-[18px] border-t border-dotted border-[#bbb]" />
          {leftTools.map((t) => (
            <div key={t.n} className="flex h-[32.4px] w-[44px] items-center">
              <Svg>{icons[t.n]}</Svg>
              {t.dd && <Arrow w={12} />}
            </div>
          ))}
        </div>
        <LayersPanel />
        <div className="w-[7px] shrink-0" />
        <MapCanvas />
      </div>

      <StatusBar />
    </div>
  );
}
